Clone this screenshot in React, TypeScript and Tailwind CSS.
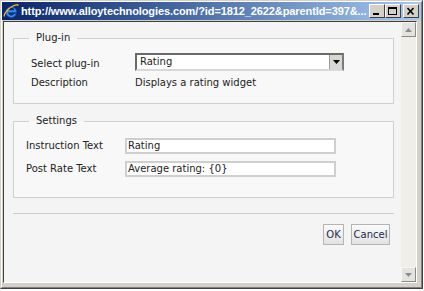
import React from "react";

const font = { fontFamily: '"DejaVu Sans", Verdana, sans-serif' };

function IeIcon() {
  return (
    <svg width="16" height="16" viewBox="0 0 16 16">
      <path d="M13.6 9.4H5.3a3.1 3.1 0 0 0 5.8 1.4h2.3a5.4 5.4 0 1 1 0.2-2.4z" fill="#3a8ef0" stroke="#0b4ea8" strokeWidth="0.6" />
      <path d="M5.4 7.3h5.8a2.9 2.9 0 0 0-5.8 0z" fill="#0a246a" />
      <path d="M1.5 13.5C0.5 11.5 4 6.5 9 3.5C12.5 1.5 15 1.2 15.2 2.6" fill="none" stroke="#f2b428" strokeWidth="1.3" />
    </svg>
  );
}

function CaptionButton({ kind, className }: { kind: "min" | "max" | "close"; className?: string }) {
  return (
    <div
      className={`w-[16px] h-[14px] bg-[#d4d0c8] border border-t-white border-l-white border-r-[#404040] border-b-[#404040] flex items-center justify-center ${className ?? ""}`}
    >
      <svg width="10" height="9" viewBox="0 0 10 9">
        {kind === "min" && <rect x="1" y="6" width="6" height="2" fill="#000" />}
        {kind === "max" && (
          <g fill="none" stroke="#000">
            <rect x="0.5" y="0.5" width="8" height="7" />
            <line x1="0.5" y1="1.5" x2="8.5" y2="1.5" />
          </g>
        )}
        {kind === "close" && (
          <g stroke="#000" strokeWidth="1.6">
            <line x1="1.5" y1="1" x2="7.5" y2="7.5" />
            <line x1="7.5" y1="1" x2="1.5" y2="7.5" />
          </g>
        )}
      </svg>
    </div>
  );
}

function ScrollArrow({ up }: { up?: boolean }) {
  return (
    <div className="w-[15px] h-[15px] bg-[#e4e3dd] border border-t-[#f6f6f4] border-l-[#f6f6f4] border-r-[#8a8a86] border-b-[#8a8a86] flex items-center justify-center">
      <svg width="7" height="4" viewBox="0 0 7 4">
        <path d={up ? "M0 4L3.5 0L7 4z" : "M0 0L7 0L3.5 4z"} fill="#8c8c8c" />
      </svg>
    </div>
  );
}

export default function App() {
  return (
    <div className="w-[424px] h-[291px] bg-white" style={font}>
      <div className="w-[423px] h-[289px] bg-[#d4d0c8] border border-t-[#d4d0c8] border-l-[#d4d0c8] border-r-[#404040] border-b-[#404040]">
        <div className="h-full flex flex-col border border-t-white border-l-white border-r-[#808080] border-b-[#808080]">
          {/* title bar */}
          <div className="h-[18px] flex items-center bg-gradient-to-r from-[#0a246a] to-[#a6caf0] pl-[1px] pr-[2px]">
            <IeIcon />
            <span
              className="ml-[2px] text-white font-bold text-[11px] tracking-[-0.1px] whitespace-nowrap"
              style={{ fontFamily: '"Liberation Sans", Arial, sans-serif' }}
            >
              http://www.alloytechnologies.com/?id=1812_2622&amp;parentId=397&amp;...
            </span>
            <div className="ml-auto flex items-center">
              <CaptionButton kind="min" />
              <CaptionButton kind="max" />
              <CaptionButton kind="close" className="ml-[2px]" />
            </div>
          </div>

          {/* body */}
          <div className="flex-1 mt-[1px] ml-[1px] mr-[4px] mb-[4px] flex border border-t-[#404040] border-l-[#404040] border-r-white border-b-white">
            <div className="flex-1 bg-[#f4f4f4] pl-[9px] pr-[7px] pt-[9px] text-[10px] text-[#222]">
              <fieldset className="border border-[#cfcfcf] bg-[#f8f8f8] px-0 pb-[13px]">
                <legend className="ml-[15px] px-[7px] leading-[14px]">Plug-in</legend>
                <div className="ml-[17px] mt-[8px] flex items-center">
                  <span className="w-[104px] leading-[14px] pt-[3px]">Select plug-in</span>
                  <div className="w-[209px] h-[18px] flex bg-white border-2 border-t-[#6a6a6a] border-l-[#6a6a6a] border-r-[#7a7a7a] border-b-[#d8d8d8]">
                    <span className="flex-1 pl-[3px] leading-[14px]">Rating</span>
                    <div className="w-[13px] bg-[#d9d7d1] border-l border-[#9a9a9a] flex items-center justify-center">
                      <svg width="7" height="4" viewBox="0 0 7 4">
                        <path d="M0 0L7 0L3.5 4z" fill="#000" />
                      </svg>
                    </div>
                  </div>
                </div>
                <div className="ml-[17px] mt-[5px] flex items-center leading-[14px]">
                  <span className="w-[104px]">Description</span>
                  <span>Displays a rating widget</span>
                </div>
              </fieldset>

              <fieldset className="mt-[10px] border border-[#cfcfcf] bg-[#f8f8f8] px-0 pb-[20px]">
                <legend className="ml-[15px] px-[7px] leading-[14px]">Settings</legend>
                <div className="ml-[12px] mt-[10px] flex items-center">
                  <span className="w-[99px] leading-[14px]">Instruction Text</span>
                  <div className="w-[211px] h-[16px] bg-white border-2 border-[#cfcfcf] pl-[1px] leading-[12px]">Rating</div>
                </div>
                <div className="ml-[12px] mt-[7px] flex items-center">
                  <span className="w-[99px] leading-[14px]">Post Rate Text</span>
                  <div className="w-[211px] h-[16px] bg-white border-2 border-[#cfcfcf] pl-[1px] leading-[12px]">
                    Average rating: {"{0}"}
                  </div>
                </div>
              </fieldset>

              <div className="mt-[15px] h-px bg-[#cccccc]" />
              <div className="mt-[10px] pr-[4px] flex justify-end gap-[7px] text-[#1d2b4f]">
                <button className="h-[21px] w-[21px] border border-[#b4b4b4] bg-gradient-to-b from-[#fbfbfb] to-[#e2e2e2]">OK</button>
                <button className="h-[21px] w-[39px] border border-[#b4b4b4] bg-gradient-to-b from-[#fbfbfb] to-[#e2e2e2]">Cancel</button>
              </div>
            </div>

            {/* scrollbar */}
            <div className="w-[15px] flex flex-col bg-[#efeee8]">
              <ScrollArrow up />
              <div className="flex-1" />
              <ScrollArrow />
            </div>
          </div>
        </div>
      </div>
    </div>
  );
}
